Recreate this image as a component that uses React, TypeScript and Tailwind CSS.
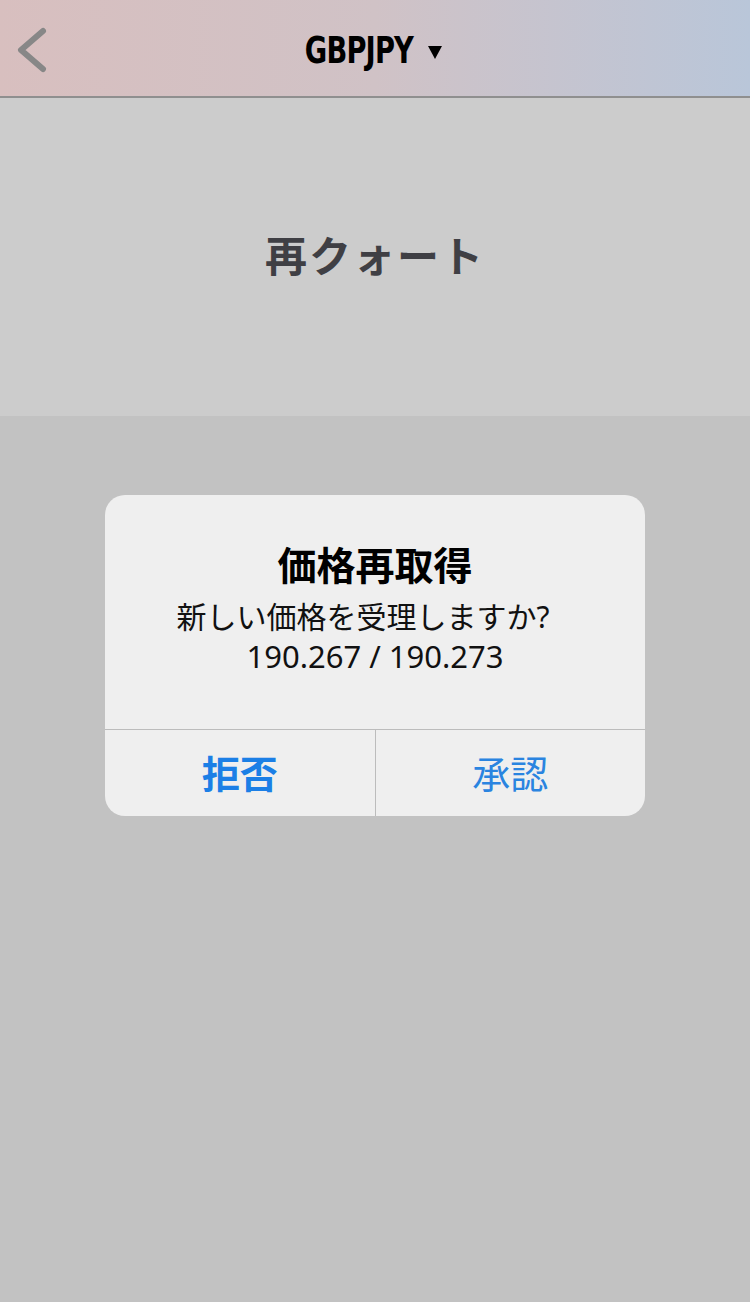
import React from "react";

const jp = { fontFamily: '"Noto Sans", "Noto Sans CJK JP", sans-serif' };

function Header() {
    return (
        <div className="h-[98px] w-full flex items-center relative border-b-2 border-[#8f8f8f]
            bg-gradient-to-r from-[#d8bfbf] via-[#d0c2c6] to-[#b9c6d9]">
            <button className="absolute left-[15px] top-[24px]">
                <svg width="36" height="52" viewBox="0 0 36 52" fill="none">
                    <path d="M28 7 L6 26 L28 45" stroke="#878787" strokeWidth="6" strokeLinecap="round" strokeLinejoin="round" />
                </svg>
            </button>
            <div className="flex-1 flex justify-center items-center pt-[6px] pr-[15px]">
                <span className="text-[37px] font-bold text-black tracking-[-1px] [font-stretch:condensed] scale-x-[0.82]"
                    style={{ fontFamily: '"DejaVu Sans", sans-serif' }}>
                    GBPJPY
                </span>
                <svg className="ml-[3px] mt-[2px]" width="14" height="13" viewBox="0 0 14 13">
                    <path d="M0 0 H14 L7 13 Z" fill="#000" />
                </svg>
            </div>
        </div>
    );
}

function RequoteDialog() {
    return (
        <div className="w-[540px] rounded-[20px] bg-[#efefef] flex flex-col" style={jp}>
            <div className="flex flex-col items-center pt-[47px] pb-[55px]">
                <h1 className="text-[39px] font-bold text-black leading-[46px]">価格再取得</h1>
                <p className="text-[30px] text-[#111] leading-[42px] mt-[8px] mr-[24px]">新しい価格を受理しますか?</p>
                <p className="text-[31px] text-[#111] leading-[36px]">190.267 / 190.273</p>
            </div>
            <div className="flex border-t border-[#bcbcbc] h-[87px]">
                <button className="flex-1 flex items-center justify-center text-[38px] font-bold text-[#1b7fe6] border-r border-[#bcbcbc]">
                    拒否
                </button>
                <button className="flex-1 flex items-center justify-center text-[38px] text-[#2a84e0]">
                    承認
                </button>
            </div>
        </div>
    );
}

export default function App() {
    return (
        <div className="w-[750px] h-[1302px] bg-[#c2c2c2] flex flex-col overflow-hidden">
            <Header />
            <div className="h-[318px] bg-[#cccccc] flex items-center justify-center" style={jp}>
                <span className="text-[42px] font-semibold text-[#3f3f44] tracking-[2px] -mt-[4px]">再クォート</span>
            </div>
            <div className="flex justify-center pt-[79px]">
                <RequoteDialog />
            </div>
        </div>
    );
}
